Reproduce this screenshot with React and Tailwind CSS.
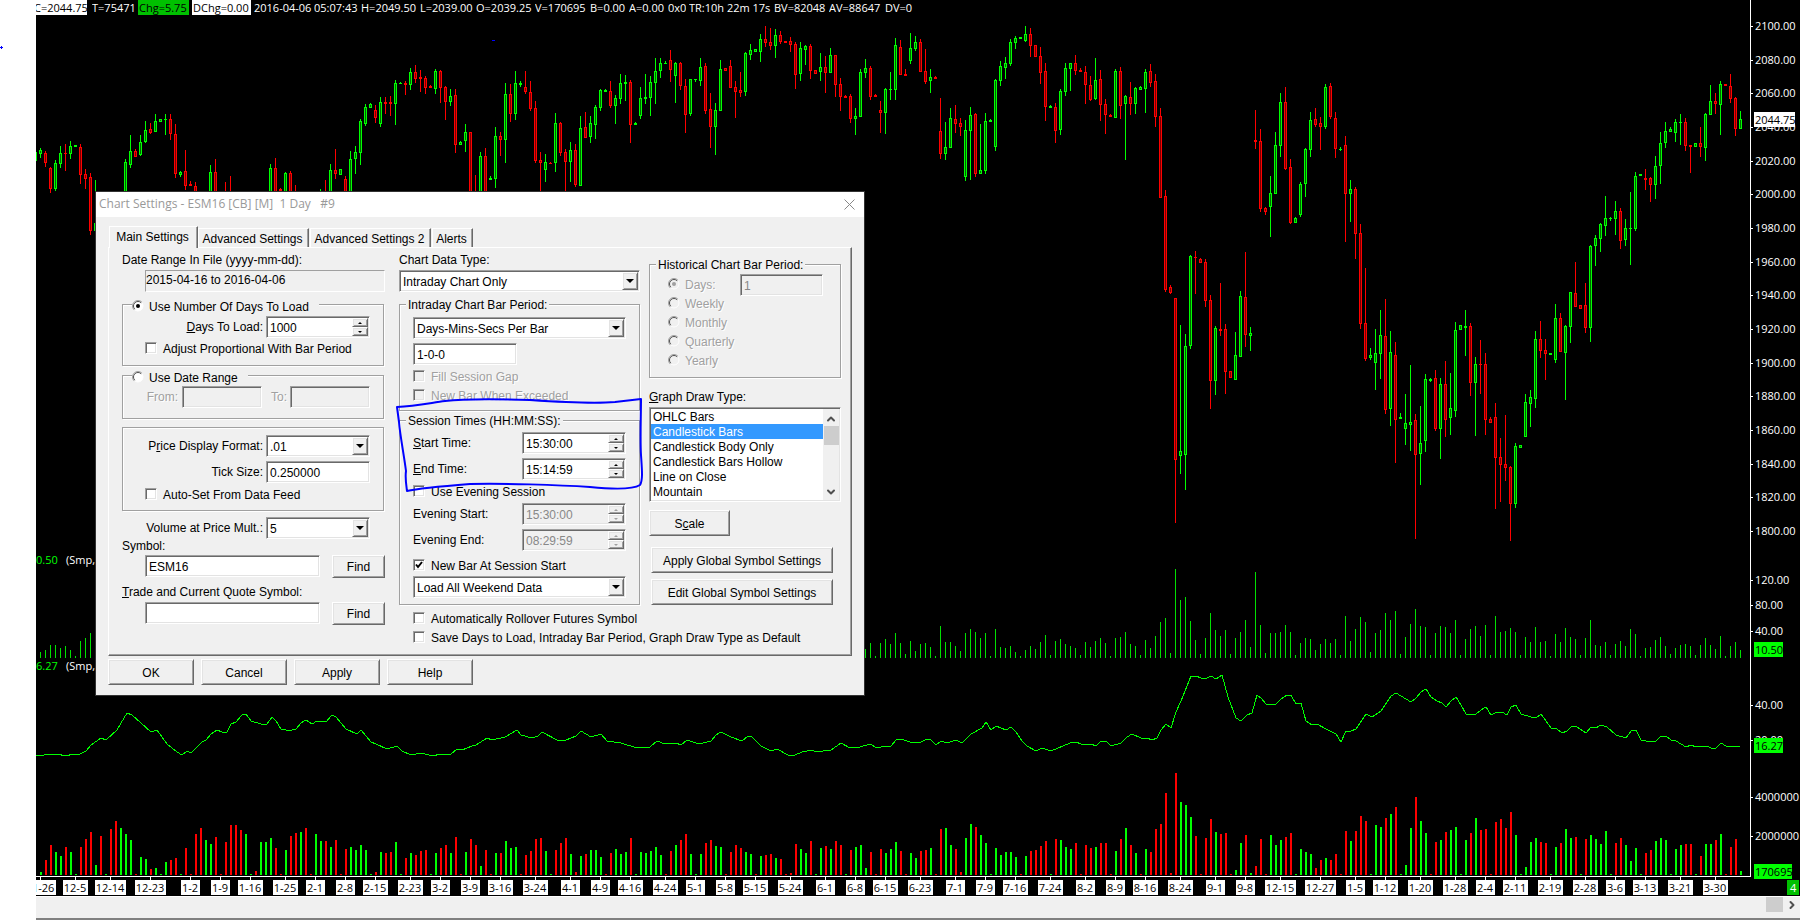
import React, { useState } from 'react';
import { ChevronUp, ChevronDown, ChevronRight } from 'lucide-react';

// one entry per bar: direction + high, body top, body bottom, low (chart pixels), "-" is no bar
const CANDLES = `
G148,150,154,158 R151,153,163,167 R167,168,189,193 G160,163,189,191 G146,153,164,168 R144,153,154,171 G141,146,154,159 G145,145,147,147 R144,147,175,184 R169,174,179,189
R173,177,231,235 G180,223,231,233 - - - - - G159,162,198,198 G135,151,165,168 R149,151,157,157
G135,142,155,156 G121,130,142,143 R123,129,133,134 G114,121,132,132 G119,119,122,122 G114,119,120,135 R114,119,134,140 R124,134,174,178 G171,172,175,177 R150,171,186,190
R181,184,186,186 R182,186,198,198 - - G165,172,198,198 R159,172,198,198 - R182,198,200,200 R176,198,200,200 -
- - - - - - G164,168,198,198 R158,168,198,198 R188,189,191,191 G172,173,198,198
R171,173,198,198 R185,198,200,200 - - - - G189,198,200,200 R180,198,200,200 G164,170,198,198 R149,170,174,179
G169,169,175,175 R176,179,198,198 G151,159,198,198 G146,152,159,174 G119,121,153,165 G104,107,124,126 G103,104,108,108 R105,110,118,123 G97,102,124,127 R97,102,104,114
R96,102,104,116 G80,83,104,125 G82,83,84,84 R81,83,85,95 G68,72,85,90 R65,72,79,83 R70,77,79,92 R76,78,88,94 R85,86,88,88 G69,71,89,94
R70,71,88,103 R86,87,102,120 G89,96,102,106 R89,95,145,153 G141,142,145,145 G124,132,141,152 R132,132,198,198 R175,198,200,200 G152,156,198,198 R148,156,198,198
G176,178,180,180 G127,136,179,188 R132,136,140,156 G83,94,140,163 R84,94,114,122 G71,83,114,120 G81,83,85,87 R71,87,92,94 R81,92,109,111 R101,108,161,163
R152,160,163,192 G154,162,170,182 R162,163,164,164 G113,123,163,172 R122,123,153,156 R149,152,162,192 G142,150,162,182 R144,150,185,187 G116,128,186,186 R112,127,138,138
G116,123,137,143 G105,107,125,139 G89,90,108,111 G89,90,92,92 R81,91,106,108 G95,98,106,124 G74,83,99,104 G75,82,84,101 R80,82,125,143 G122,123,125,125
G87,98,116,119 G74,97,99,104 G76,82,98,116 G58,71,83,104 G58,63,71,78 G61,63,64,64 R50,60,70,82 G62,63,76,103 R62,63,86,90 R79,86,115,133
G79,79,114,116 G79,79,80,82 G58,67,81,86 R63,66,111,114 R93,109,127,148 G103,110,127,155 G60,69,111,111 R68,68,71,71 R60,66,88,88 R81,87,92,118
R72,90,93,97 G52,53,92,96 G44,50,55,60 G49,49,52,52 G34,39,52,62 R26,39,43,47 R28,42,46,50 G29,35,46,58 R31,35,42,44 R41,41,43,43
R37,41,45,52 R42,44,75,89 G42,48,74,81 G45,46,50,65 R44,46,71,79 R70,70,74,74 G53,67,72,81 R56,67,73,93 G48,55,73,73 R55,55,85,97
R78,84,97,111 R95,96,98,98 R94,96,119,123 G108,116,119,135 G69,72,117,117 G59,68,73,78 R66,68,97,100 R94,95,97,97 R101,110,113,133 G88,89,113,134
G72,89,90,100 G38,45,90,100 R40,47,75,75 R69,74,76,76 G33,48,61,64 G36,42,49,51 R39,42,72,72 R49,71,82,84 G69,77,81,93 R76,77,79,79
R98,131,154,159 G122,147,154,160 G108,118,148,148 R105,119,124,133 R118,123,127,136 G120,130,177,181 G107,115,131,180 R113,114,174,177 G124,170,174,174 G113,121,171,174
G119,120,122,122 G79,80,147,151 G61,66,81,86 G57,63,68,79 G39,42,64,66 G36,38,43,49 G37,37,39,39 G26,34,41,42 R28,34,46,57 R45,45,57,57
R47,56,73,84 R63,71,107,121 G105,106,108,108 R103,107,131,143 G89,91,130,135 G63,68,92,96 G63,63,69,91 R55,63,71,75 R68,70,72,72 R66,72,85,104
R76,85,100,101 G58,80,99,100 R70,79,105,121 R99,104,115,134 R114,115,117,117 G69,71,118,118 R67,71,106,119 G95,96,104,160 R82,97,104,115 G87,88,104,114
G86,87,90,90 G69,72,89,113 R64,71,83,87 R74,81,117,127 R108,116,198,198 R190,196,290,292 R285,287,293,294 R298,298,460,523 G325,451,456,474 G334,346,455,490
G255,256,346,349 R251,257,258,294 R258,259,263,263 R259,262,301,307 R295,300,381,409 G326,328,381,395 R283,329,331,336 R324,329,372,394 R371,371,378,378 G332,355,380,380
G291,296,357,357 R252,297,335,347 G327,333,336,351 R110,140,142,149 R129,141,209,212 R207,208,212,215 G176,193,207,237 G132,145,194,194 G93,102,146,157 R87,102,169,170
R159,167,223,224 G217,218,223,223 G182,184,215,217 G148,149,184,197 G112,120,150,157 R108,119,125,127 R117,123,127,150 G84,87,127,129 R83,86,117,119 R112,118,149,158
G147,149,150,151 R136,145,194,242 G180,189,194,222 R187,189,234,259 R224,233,324,329 R268,323,359,361 G348,355,358,360 G329,353,363,390 G310,335,354,379 R299,336,410,414
G331,352,409,426 R342,355,420,463 G413,417,419,419 G394,423,429,445 G365,422,425,451 R414,420,455,539 G406,443,454,485 G374,379,441,452 G378,379,381,382 R370,378,429,431
G378,384,429,459 R361,384,420,437 G373,408,418,435 G322,330,411,417 G325,325,330,330 G310,326,328,356 R323,326,383,396 G357,364,383,436 R340,364,365,394 R353,364,420,435
R417,419,423,423 R403,417,458,509 R438,457,465,502 R415,464,468,481 R466,467,504,541 G443,446,504,508 G445,445,448,448 G394,402,437,437 G390,397,404,427 G331,339,399,408
R321,339,351,358 R339,350,354,380 G353,353,355,355 G304,318,360,363 R313,318,352,352 G325,326,353,400 G292,292,327,343 R262,293,307,307 R305,305,309,309 R283,305,328,333
G245,246,328,342 G235,238,246,266 G223,224,239,252 G196,218,226,236 G217,218,219,221 G201,211,219,235 R208,211,241,249 G219,228,240,246 G192,228,229,265 G172,176,229,231
G174,174,176,176 R169,178,180,190 R177,178,185,202 G156,166,185,199 G132,143,166,184 G122,131,143,148 G127,129,132,132 G119,122,133,142 G114,122,123,145 R118,122,146,151
R145,145,147,173 G143,143,147,147 R127,143,147,157 G113,114,148,161 G85,101,115,115 R93,101,104,114 G81,84,105,135 R84,84,86,86 R74,86,99,103 R97,98,129,136
G111,119,129,129`.trim().split(/\s+/);

const VOLUME = `
G3 R15 R30 G23 G19 R28 G23 G1 R28 R36 R43 G10 R39 G1 R46 R54 G47 G41 G35 R1
G18 G16 R6 G7 G1 G13 R15 R17 G1 R27 R1 R41 R47 G35 G31 R38 R1 R33 R50 R50
R45 G41 G1 R4 G33 G33 G37 R27 R1 G25 R39 R42 G43 R47 R1 G41 G34 R34 G28 R35
R1 R26 G28 G25 G30 G25 G1 R3 G23 R22 R23 G33 G1 R17 G22 R20 R24 R25 G1 G22
R27 R30 G22 R38 R1 G23 R36 R30 G9 R25 R1 G22 R22 G34 G27 G28 R1 R20 R24 R36
R37 G24 G1 R25 R32 R37 G21 R3 G19 R21 G25 G25 G18 R1 R22 G26 G21 G23 R37 G1
G23 G22 G24 G28 G20 R1 R24 G30 R35 R41 G21 G1 G21 R32 R35 G29 G28 R1 R23 R30
R27 G23 G21 R1 G19 R20 R21 G17 R16 R1 R2 R31 G26 G22 R34 G1 G27 R29 G26 R34
R30 G1 R25 G28 G30 G7 R23 R1 R26 G22 G26 G33 R24 R1 G22 G17 R24 R25 G27 R1
R46 G47 G30 R26 R3 G37 G51 R48 G40 G32 G1 G27 G20 G23 G23 G18 R1 G19 R24 R25
R29 R34 G1 R36 G35 G28 G26 R32 R1 R30 R27 G28 R32 R32 R1 G24 R36 G47 R30 G22
R1 G26 R23 R46 R51 R82 R2 R102 G73 G70 G58 R39 R1 R37 R56 G43 R41 R42 R1 G5
G32 R40 G2 R9 R36 R1 G40 G30 G35 R38 R42 G1 G26 G23 G21 R7 R15 G17 R15 R21
R1 R44 G34 R44 R59 R54 G1 G50 G48 R57 G61 R68 G1 G10 G47 R78 G54 G42 R1 R33
G35 R43 G45 G48 G1 G35 R42 G57 R45 R46 R1 R53 R56 R47 R63 G40 G1 G8 G33 G37
R33 R32 G1 G28 R32 G46 G37 R38 G1 R36 G40 G36 G31 G44 G1 R32 R37 G30 G14 G27
G1 R22 R25 G34 G37 G35 G1 G26 G30 R31 R31 G1 R19 G31 G31 R35 G41 R1 R28 R36 G4`.trim().split(/\s+/);

// true range, first bar index -> heights
const TRUE_RANGE = [
  [0, [6, 8, 13, 13, 10, 12, 8, 2, 17, 20, 25, 22]],
  [165, [
    9, 15, 2, 15, 19, 14, 25, 15, 4, 17, 7, 14, 15, 11, 2, 32, 16, 16, 12, 7, 25, 29, 26, 20, 25, 2, 29, 11, 10, 12, 6, 2, 8, 12, 9,
    16, 23, 3, 17, 19, 14, 12, 10, 3, 16, 11, 17, 20, 15, 2, 20, 21, 26, 14, 12, 3, 18, 10, 22, 36, 40, 5, 89, 58, 61, 37, 18, 4, 20, 45,
    28, 22, 28, 4, 20, 26, 38, 11, 86, 33, 5, 25, 25, 26, 33, 26, 3, 15, 20, 19, 8, 14, 19, 15, 19, 3, 42, 17, 29, 41, 36, 6, 25, 28, 45,
    38, 47, 4, 21, 34, 49, 32, 31, 3, 25, 32, 31, 25, 38, 3, 19, 29, 32, 22, 33, 3, 42, 26, 27, 30, 26, 3, 21, 16, 31, 16, 17, 2, 24, 16,
    30, 21, 19, 3, 20, 38, 13, 12, 16, 3, 14, 17, 12, 29, 24, 2, 10, 11, 18, 21, 12, 4, 10, 13, 14, 12, 3, 13, 20, 13, 9, 22, 2, 12, 16, 8,
  ]],
];

const ATR = `36,755 44,755 57,754 66,756 73,754 78,755 86,751 91,745 101,738 106,740 117,730 121,723 127,713 132,715 141,723 151,732 157,730 167,744 177,752 182,755
187,751 191,753 202,742 206,740 211,734 217,730 222,732 227,732 231,724 236,722 242,715 246,714 251,721 261,724 267,724 272,717 276,721 281,729 286,730 292,730
296,729 301,723 306,720 312,724 317,721 326,722 332,715 336,717 346,729 357,734 361,730 371,742 376,744 387,749 397,746 402,751 411,755 422,753 432,756 441,754
450,755 457,749 462,750 472,746 476,745 487,738 492,740 505,737 517,730 521,735 532,738 538,736 542,732 557,740 566,740 576,736 581,731 591,737 601,734 607,741
621,743 637,748 650,747 657,741 665,744 676,743 681,745 687,740 699,744 711,741 716,735 721,732 731,737 742,741 748,736 752,737 761,746 771,751 777,749 788,755
795,755 802,752 812,750 816,752 831,750 841,743 850,748 860,747 870,744 877,748 885,746 891,746 896,740 901,739 910,742 921,742 927,739 931,740 936,745 941,741
947,743 956,740 962,743 971,734 982,728 986,722 991,730 996,726 1006,730 1011,727 1016,732 1022,741 1027,746 1036,751 1042,748 1051,751 1070,743 1076,742 1081,744 1091,744
1096,746 1101,741 1106,741 1111,746 1121,743 1127,737 1132,734 1141,738 1147,738 1152,740 1157,738 1161,730 1166,724 1171,728 1176,712 1181,701 1191,676 1196,676 1201,678 1207,678
1211,676 1216,679 1222,675 1228,697 1236,718 1241,721 1247,715 1252,713 1257,695 1261,698 1266,704 1276,704 1281,699 1287,695 1291,695 1296,704 1301,703 1306,721 1312,725 1317,724
1326,729 1336,734 1341,742 1346,731 1351,731 1356,729 1366,714 1372,717 1381,711 1391,696 1396,693 1401,696 1411,702 1416,698 1421,692 1426,689 1431,697 1437,701 1442,703 1446,707
1451,701 1456,697 1461,705 1466,714 1476,714 1481,710 1486,707 1491,715 1497,712 1502,712 1507,715 1511,707 1516,705 1521,714 1531,717 1536,718 1541,714 1551,728 1557,729 1562,733
1567,731 1572,726 1577,727 1586,733 1591,727 1596,728 1601,725 1607,727 1616,735 1626,738 1631,731 1636,730 1641,740 1646,741 1656,741 1661,736 1666,736 1671,740 1676,741 1686,747
1691,745 1696,747 1701,746 1707,746 1711,748 1716,748 1721,743 1726,746 1740,746`;

const DATES = [
  [0, '11-26'], [7, '12-5'], [14, '12-14'], [22, '12-23'], [30, '1-2'], [36, '1-9'], [42, '1-16'], [49, '1-25'], [55, '2-1'], [61, '2-8'],
  [67, '2-15'], [74, '2-23'], [80, '3-2'], [86, '3-9'], [92, '3-16'], [99, '3-24'], [106, '4-1'], [112, '4-9'], [118, '4-16'], [125, '4-24'],
  [131, '5-1'], [137, '5-8'], [143, '5-15'], [150, '5-24'], [157, '6-1'], [163, '6-8'], [169, '6-15'], [176, '6-23'], [183, '7-1'], [189, '7-9'],
  [195, '7-16'], [202, '7-24'], [209, '8-2'], [215, '8-9'], [221, '8-16'], [228, '8-24'], [235, '9-1'], [241, '9-8'], [248, '12-15'], [256, '12-27'],
  [263, '1-5'], [269, '1-12'], [276, '1-20'], [283, '1-28'], [289, '2-4'], [295, '2-11'], [302, '2-19'], [309, '2-28'], [315, '3-6'], [321, '3-13'],
  [328, '3-21'], [335, '3-30'],
];

const AXIS_LABELS = [
  ...Array.from({ length: 16 }, (_, n) => [Math.round(26 + n * 33.66), `${2100 - n * 20}.00`]),
  [580, '120.00'], [605, '80.00'], [631, '40.00'], [705, '40.00'], [740, '20.00'], [797, '4000000'], [836, '2000000'],
];

const AXIS_MARKS = [
  [112, 41, '2044.75', '#fff'],
  [642, 29, '10.50', '#0f0'],
  [738, 29, '16.27', '#0f0'],
  [864, 38, '170695', '#0f0'],
];

const QUOTES = [
  ['C=2044.75', 'w-[51px] bg-white text-black -indent-[2px]'],
  ['T=75471', 'w-[46px] ml-[5px]'],
  ['Chg=5.75', 'w-[51px] bg-[#00c000] text-black indent-px'],
  ['DChg=0.00', 'w-[59px] ml-[3px] bg-white text-black indent-px'],
  ['2016-04-06', 'w-[58px] ml-[3px]'],
  ['05:07:43', 'w-[46px] ml-[2px]'],
  ['H=2049.50', 'w-[56px] ml-px'],
  ['L=2039.00', 'w-[53px] ml-[3px]'],
  ['O=2039.25', 'w-[56px] ml-[3px]'],
  ['V=170695', 'w-[52px] ml-[3px]'],
  ['B=0.00', 'w-[36px] ml-[3px]'],
  ['A=0.00', 'w-[36px] ml-[3px]'],
  ['0x0', 'w-[18px] ml-[3px]'],
  ['TR:10h 22m 17s', 'w-[82px] ml-[3px]'],
  ['BV=82048', 'w-[52px] ml-[3px]'],
  ['AV=88647', 'w-[53px] ml-[3px]'],
  ['DV=0', 'w-[29px] ml-[3px]'],
];

const DRAW_TYPES = ['OHLC Bars', 'Candlestick Bars', 'Candlestick Body Only', 'Candlestick Bars Hollow', 'Line on Close', 'Mountain'];

const sunken = 'border border-[#a0a0a0] border-r-white border-b-white shadow-[inset_1px_1px_0_#696969,inset_-1px_-1px_0_#e3e3e3]';
const raised = 'bg-[#f0f0f0] border border-white border-r-[#696969] border-b-[#696969] shadow-[inset_1px_1px_0_#e3e3e3,inset_-1px_-1px_0_#a0a0a0]';
const disabledText = 'text-[#a0a0a0] [text-shadow:1px_1px_0_#fff]';

const barX = (i) => 4 + i * 5;
const bright = (c) => (c === 'G' ? '#00ff00' : '#ff0000');

const Candle = ({ i, bar }) => {
  if (bar === '-') return null;
  const [high, top, bottom, low] = bar.slice(1).split(',').map(Number);
  const h = Math.max(bottom - top, 1);
  return (
    <g fill={bright(bar[0])}>
      <rect x={barX(i)} y={high} width={1} height={Math.max(low - high, 1)} />
      <rect x={barX(i) - 1} y={top} width={3} height={h} />
      {h > 2 && <rect x={barX(i)} y={top + 1} width={1} height={h - 2} fill={bar[0] === 'G' ? '#006400' : '#780000'} />}
    </g>
  );
};

const Chart = () => (
  <svg className="flex-1 min-w-0 h-full text-[11px] font-['Open_Sans',sans-serif]" shapeRendering="crispEdges">
    <rect x={0} y={152} width={1} height={9} fill="#0f0" />
    {CANDLES.map((bar, i) => <Candle key={i} i={i} bar={bar} />)}
    <rect x={456} y={40} width={3} height={1} fill="#00f" />

    {/* True range histogram */}
    {TRUE_RANGE.map(([start, heights]) =>
      heights.map((h, n) => <rect key={start + n} x={barX(start + n)} y={658 - h} width={1} height={h} fill="#00e000" />)
    )}
    <text x={0} y={564} fill="#0f0">0.50</text>
    <text x={30} y={564} fill="#fff">(Smp, 1)</text>

    {/* Average true range */}
    <polyline points={ATR} transform="translate(-36 0)" fill="none" stroke="#0f0" strokeWidth={1} />
    <text x={0} y={670} fill="#0f0">6.27</text>
    <text x={30} y={670} fill="#fff">(Smp, 14)</text>

    {/* Volume */}
    {VOLUME.map((bar, i) => {
      const h = Number(bar.slice(1));
      return <rect key={i} x={barX(i)} y={875 - h} width={2} height={h} fill={bright(bar[0])} />;
    })}

    {/* Time axis */}
    <rect x={0} y={876} width="100%" height={1} fill="#fff" />
    {DATES.map(([i, label]) => {
      const w = label.length * 6 + 1;
      return (
        <g key={i}>
          <rect x={barX(i)} y={877} width={1} height={3} fill="#fff" />
          <rect x={barX(i) - Math.floor(w / 2)} y={880} width={w} height={15} fill="#fff" />
          <text x={barX(i)} y={892} textAnchor="middle" fill="#000">{label}</text>
        </g>
      );
    })}
  </svg>
);

const PriceAxis = () => (
  <svg className="w-[50px] h-full shrink-0 text-[11px] font-['Open_Sans',sans-serif]" shapeRendering="crispEdges">
    <rect x={0} y={0} width={1} height={877} fill="#fff" />
    {AXIS_LABELS.map(([y, label]) => (
      <g key={y} fill="#fff">
        <rect x={1} y={y} width={2} height={1} />
        <text x={5} y={y + 4}>{label}</text>
      </g>
    ))}
    {AXIS_MARKS.map(([y, w, label, color]) => (
      <g key={y}>
        <rect x={4} y={y} width={w} height={15} fill={color} />
        <text x={5} y={y + 12} fill="#000">{label}</text>
      </g>
    ))}
    <rect x={37} y={880} width={12} height={15} fill="#00c000" />
    <text x={40} y={892} fill="#fff">4</text>
  </svg>
);

const Button = ({ className, children }) => (
  <button type="button" className={`${raised} ${className} pt-px text-center leading-4`}>{children}</button>
);

const TextBox = ({ className = '', disabled, ...props }) => (
  <input
    type="text"
    disabled={disabled}
    className={`${sunken} ${className} h-[22px] px-[3px] pt-[2px] outline-none ${disabled ? 'bg-[#f0f0f0] text-[#888]' : 'bg-white text-black'}`}
    {...props}
  />
);

const Spinner = ({ id, value, disabled, label }) => {
  const arrow = disabled ? 'border-b-[#a0a0a0]' : 'border-b-black';
  const arrowDown = disabled ? 'border-t-[#a0a0a0]' : 'border-t-black';
  return (
    <div className={`${sunken} flex h-[22px] w-[104px] shrink-0 p-px ${disabled ? 'bg-[#f0f0f0]' : 'bg-white'}`}>
      <input id={id} aria-label={label} disabled={disabled} defaultValue={value} className={`min-w-0 flex-1 pt-px pl-[2px] outline-none ${disabled ? 'text-[#888]' : ''}`} />
      <div className="flex w-4 flex-col">
        <button type="button" aria-label="Up" className={`${raised} flex h-[9px] items-center justify-center`}>
          <span className={`border-x-2 border-b-2 border-x-transparent ${arrow}`} />
        </button>
        <button type="button" aria-label="Down" className={`${raised} flex h-[9px] items-center justify-center`}>
          <span className={`border-x-2 border-t-2 border-x-transparent ${arrowDown}`} />
        </button>
      </div>
    </div>
  );
};

const Dropdown = ({ id, label, value, className }) => (
  <div className={`${sunken} ${className} relative h-[22px] shrink-0 bg-white p-px`}>
    <select id={id} aria-label={label} defaultValue={value} className="h-full w-full appearance-none bg-transparent pt-[2px] pl-[2px] outline-none">
      <option>{value}</option>
    </select>
    <span className={`${raised} pointer-events-none absolute top-px right-px bottom-px flex w-4 items-center justify-center`}>
      <span className="border-x-4 border-t-4 border-x-transparent border-t-black" />
    </span>
  </div>
);

const Check = ({ label, checked, disabled, className = '' }) => {
  const [on, setOn] = useState(!!checked);
  return (
    <label className={`${className} flex h-4 items-center whitespace-nowrap ${disabled ? disabledText : ''}`}>
      <input type="checkbox" checked={on} disabled={disabled} onChange={() => setOn(!on)} className="peer sr-only" />
      <span className={`${sunken} mr-[6px] flex h-3 w-3 shrink-0 items-center justify-center ${disabled ? 'bg-[#f0f0f0]' : 'bg-white'}`}>
        {on && (
          <svg width="8" height="8" viewBox="0 0 8 8">
            <path d="M1 3.5 L3 6 L7 1" fill="none" stroke="#000" strokeWidth="2" />
          </svg>
        )}
      </span>
      <span className="pt-[2px]">{label}</span>
    </label>
  );
};

const Radio = ({ name, label, checked, disabled, className = '' }) => (
  <label className={`${className} flex items-center whitespace-nowrap ${disabled ? disabledText : ''}`}>
    <input type="radio" name={name} defaultChecked={checked} disabled={disabled} className="sr-only" />
    <svg width="12" height="12" viewBox="0 0 12 12" className="mr-[5px]">
      <circle cx="6" cy="6" r="5" fill={disabled ? '#f0f0f0' : '#fff'} stroke="#fff" />
      <path d="M2.1 9.9 A5.5 5.5 0 0 1 9.9 2.1" fill="none" stroke="#a0a0a0" />
      <path d="M2.8 9.2 A4.5 4.5 0 0 1 9.2 2.8" fill="none" stroke="#505050" />
      {checked && <circle cx="6" cy="6" r="2" fill={disabled ? '#a0a0a0' : '#000'} />}
    </svg>
    <span className="pt-[2px]">{label}</span>
  </label>
);

const Group = ({ legend, legendClass = '', className, children }) => (
  <fieldset className={`${className} min-w-0 border border-[#a0a0a0] shadow-[1px_1px_0_#fff,inset_1px_1px_0_#fff]`}>
    {legend && <legend className={`${legendClass} h-4 bg-[#f0f0f0] leading-[18px]`}>{legend}</legend>}
    {children}
  </fieldset>
);

const LoadSettings = () => (
  <div className="w-[262px]">
    <label htmlFor="range" className="mt-1 block h-4">Date Range In File (yyyy-mm-dd):</label>
    <input id="range" readOnly defaultValue="2015-04-16 to 2016-04-06" className="mt-[2px] ml-[23px] h-[22px] w-[240px] border border-[#a0a0a0] border-r-white border-b-white pb-[2px] outline-none" />

    <Group className="mt-1 h-[70px]" legendClass="ml-[9px] pr-[10px]" legend={<Radio name="load" checked label="Use Number Of Days To Load" />}>
      <div className="flex items-center justify-end gap-[3px] pt-1 pr-[13px]">
        <label htmlFor="days"><u>D</u>ays To Load:</label>
        <Spinner id="days" value="1000" />
      </div>
      <Check className="mt-[2px] ml-[22px]" label="Adjust Proportional With Bar Period" />
    </Group>

    <Group className="mt-px h-[52px]" legendClass="ml-[9px] pr-[10px]" legend={<Radio name="load" label="Use Date Range" />}>
      <div className="flex items-center justify-end pt-[3px] pr-[13px]">
        <label htmlFor="from" className={`mr-1 ${disabledText}`}>From:</label>
        <TextBox id="from" disabled className="w-20" />
        <label htmlFor="to" className={`mr-[3px] ml-[9px] ${disabledText}`}>To:</label>
        <TextBox id="to" disabled className="w-20" />
      </div>
    </Group>

    <Group className="mt-2 h-[84px]">
      <div className="flex items-center justify-end gap-[3px] pt-[7px] pr-[13px]">
        <label htmlFor="format">P<u>r</u>ice Display Format:</label>
        <Dropdown id="format" value=".01" className="w-[104px]" />
      </div>
      <div className="mt-1 flex items-center justify-end gap-[3px] pr-[13px]">
        <label htmlFor="tick">Tick Size:</label>
        <TextBox id="tick" defaultValue="0.250000" className="w-[104px]" />
      </div>
      <Check className="mt-[3px] ml-[22px]" label="Auto-Set From Data Feed" />
    </Group>

    <div className="mt-[6px] flex items-center justify-end gap-[3px] pr-[14px]">
      <label htmlFor="mult">Volume at Price Mult.:</label>
      <Dropdown id="mult" value="5" className="w-[104px]" />
    </div>
    <label htmlFor="symbol" className="block h-[14px] leading-[14px]">Symbol:</label>
    <div className="mt-[2px] ml-[23px] flex w-[240px] justify-between">
      <TextBox id="symbol" defaultValue="ESM16" className="w-[175px]" />
      <Button className="h-[23px] w-[53px]">Find</Button>
    </div>
    <label htmlFor="trade" className="mt-[6px] block h-4"><u>T</u>rade and Current Quote Symbol:</label>
    <div className="mt-[2px] ml-[23px] flex w-[240px] justify-between">
      <TextBox id="trade" className="w-[175px]" />
      <Button className="h-[23px] w-[53px]">Find</Button>
    </div>
  </div>
);

const TimeRow = ({ id, label, value, disabled, className }) => (
  <div className={`${className} flex items-center justify-between`}>
    <label htmlFor={id}>{label}</label>
    <Spinner id={id} value={value} disabled={disabled} />
  </div>
);

const SessionSettings = () => (
  <div className="w-[241px]">
    <label htmlFor="datatype" className="mt-1 block h-4">Chart Data Type:</label>
    <Dropdown id="datatype" value="Intraday Chart Only" className="mt-[2px] w-[241px]" />

    <Group className="mt-1 h-[115px] px-[13px]" legendClass="-ml-[7px] px-[2px]" legend="Intraday Chart Bar Period:">
      <Dropdown label="Bar period type" value="Days-Mins-Secs Per Bar" className="mt-[5px] w-[213px]" />
      <TextBox aria-label="Bar period" defaultValue="1-0-0" className="mt-1 block w-[104px]" />
      <Check className="mt-[3px]" disabled label="Fill Session Gap" />
      <Check className="mt-[3px]" disabled label="New Bar When Exceeded" />
    </Group>

    <Group className="mt-px h-[193px] px-[13px]" legendClass="-ml-[7px] px-[2px]" legend="Session Times (HH:MM:SS):">
      <TimeRow id="start" className="mt-1" label={<><u>S</u>tart Time:</>} value="15:30:00" />
      <TimeRow id="end" className="mt-1" label={<><u>E</u>nd Time:</>} value="15:14:59" />
      <Check className="mt-[3px]" label="Use Evening Session" />
      <TimeRow id="evestart" className="mt-1" disabled label="Evening Start:" value="15:30:00" />
      <TimeRow id="eveend" className="mt-1" disabled label="Evening End:" value="08:29:59" />
      <Check className="mt-[6px]" checked label="New Bar At Session Start" />
      <Dropdown label="Weekend data" value="Load All Weekend Data" className="mt-[3px] w-[213px]" />
    </Group>

    <Check className="mt-[5px] ml-[14px]" label="Automatically Rollover Futures Symbol" />
    <Check className="mt-[3px] ml-[14px]" label="Save Days to Load, Intraday Bar Period, Graph Draw Type as Default" />
  </div>
);

const DrawSettings = () => {
  const [selected, setSelected] = useState('Candlestick Bars');
  return (
    <div className="w-[192px]">
      <Group className="mt-2 h-[122px]" legendClass="ml-[6px] px-[2px]" legend="Historical Chart Bar Period:">
        <div className="flex items-start justify-between pt-[2px] pr-[17px] pl-[18px]">
          <div>
            {['Days:', 'Weekly', 'Monthly', 'Quarterly', 'Yearly'].map((label, n) => (
              <Radio key={label} name="hist" disabled checked={n === 0} label={label} className="h-[19px]" />
            ))}
          </div>
          <TextBox aria-label="Historical days" disabled defaultValue="1" className="w-[83px]" />
        </div>
      </Group>

      <div id="drawtype" className="mt-[11px] h-4"><u>G</u>raph Draw Type:</div>
      <div className={`${sunken} mt-[2px] flex h-[95px] bg-white p-px`}>
        <ul role="listbox" aria-labelledby="drawtype" className="flex-1 overflow-hidden">
          {DRAW_TYPES.map((type) => (
            <li
              key={type}
              role="option"
              aria-selected={type === selected}
              onClick={() => setSelected(type)}
              className={`h-[15px] pl-[2px] leading-[17px] whitespace-nowrap ${type === selected ? 'bg-[#3399ff] text-white' : ''}`}
            >
              {type}
            </li>
          ))}
        </ul>
        <div className="flex w-4 flex-col items-center bg-[#f0f0f0] text-[#505050]">
          <ChevronUp size={12} strokeWidth={4} className="mt-1" />
          <div className="mt-px h-[19px] w-[15px] bg-[#cdcdcd]" />
          <ChevronDown size={12} strokeWidth={4} className="mt-auto mb-[2px]" />
        </div>
      </div>
      <Button className="mt-2 block h-[26px] w-[81px]">S<u>c</u>ale</Button>
      <Button className="mt-[11px] ml-[2px] block h-[26px] w-[182px]">Apply Global Symbol Settings</Button>
      <Button className="mt-[6px] ml-[2px] block h-[26px] w-[182px]">Edit Global Symbol Settings</Button>
    </div>
  );
};

const tabEdge = 'border border-white border-b-0 border-r-[#696969] shadow-[inset_-1px_0_0_#a0a0a0] bg-[#f0f0f0]';

const SettingsDialog = () => (
  <div role="dialog" aria-label="Chart Settings" className="absolute top-[191px] left-[95px] w-[770px] border border-[#333] bg-[#f0f0f0] pb-[10px] text-black">
    <div className="flex h-[25px] items-center justify-between bg-white pr-[9px] pb-px pl-[3px] font-['Open_Sans',sans-serif] text-[12px] text-[#999]">
      <span className="whitespace-pre">Chart Settings - ESM16 [CB] [M]  1 Day   #9</span>
      <button type="button" aria-label="Close">
        <svg width="11" height="11" viewBox="0 0 11 11"><path d="M.5 .5 L10.5 10.5 M10.5 .5 L.5 10.5" stroke="#888" fill="none" /></svg>
      </button>
    </div>

    <div className="px-3 pt-[9px]">
      <div role="tablist" className="flex items-end">
        <button role="tab" aria-selected="true" className={`${tabEdge} relative -mb-px ml-px h-[22px] w-[89px] pr-[2px] pb-px`}>Main Settings</button>
        <button role="tab" className={`${tabEdge} h-[19px] w-[111px] pt-px pr-[2px]`}>Advanced Settings</button>
        <button role="tab" className={`${tabEdge} ml-px h-[19px] w-[121px] pt-px pr-[2px]`}>Advanced Settings 2</button>
        <button role="tab" className={`${tabEdge} ml-px h-[19px] w-[41px] pt-px pr-[2px]`}>Alerts</button>
      </div>
      <div className="flex h-[409px] border border-white border-r-[#696969] border-b-[#696969] pl-[13px] shadow-[inset_-1px_-1px_0_#a0a0a0]">
        <LoadSettings />
        <div className="ml-[15px]"><SessionSettings /></div>
        <div className="ml-[9px]"><DrawSettings /></div>
      </div>
      <div className="mt-[3px] flex gap-[7px]">
        {['OK', 'Cancel', 'Apply', 'Help'].map((label) => (
          <Button key={label} className="h-[26px] w-[86px]">{label}</Button>
        ))}
      </div>
    </div>

    {/* Pen stroke around the session times */}
    <svg className="pointer-events-none absolute top-[200px] left-[296px]" width="260" height="106" viewBox="392 392 260 106">
      <path
        d="M397 407 C415 406 430 403 445 401 C470 398 500 399 530 400 C560 402 590 404 615 402 L641 399 C641 415 640 440 641 455 C642 470 643 480 640 485 C632 490 610 489 590 487 C560 485 500 483 470 484 C445 486 420 488 407 491 C406 484 405 478 406 471 C404 455 400 435 399 422 Z"
        fill="none" stroke="#00f" strokeWidth="2" strokeLinejoin="round"
      />
    </svg>
  </div>
);

const App = () => (
  <div className="relative flex h-screen min-h-[920px] flex-col overflow-hidden bg-white pr-[2px] pl-9 font-['Liberation_Sans',Arial,sans-serif] text-[12px] leading-4">
    <svg className="absolute top-[46px] left-0" width="3" height="3"><path d="M0 1.5h3M1.5 0v3" stroke="#00f" /></svg>

    <div className="relative flex h-[896px] shrink-0 bg-black">
      <Chart />
      <PriceAxis />
      {/* Quote line */}
      <div className="absolute top-0 left-0 flex font-['Open_Sans',sans-serif] text-[11px] leading-[15px] text-white">
        {QUOTES.map(([text, cell]) => (
          <span key={text} className={`${cell} h-[15px] overflow-hidden whitespace-nowrap`}>{text}</span>
        ))}
      </div>
    </div>

    {/* Horizontal scroll bar */}
    <div className="mt-px flex flex-1 justify-end border-b-2 border-[#808080] bg-[#f0f0f0]">
      <div className="h-[15px] w-[17px] bg-[#cdcdcd]" />
      <ChevronRight size={12} strokeWidth={4} className="mt-[2px] mr-[2px] ml-[3px] text-[#505050]" />
    </div>

    <SettingsDialog />
  </div>
);

export default App;
